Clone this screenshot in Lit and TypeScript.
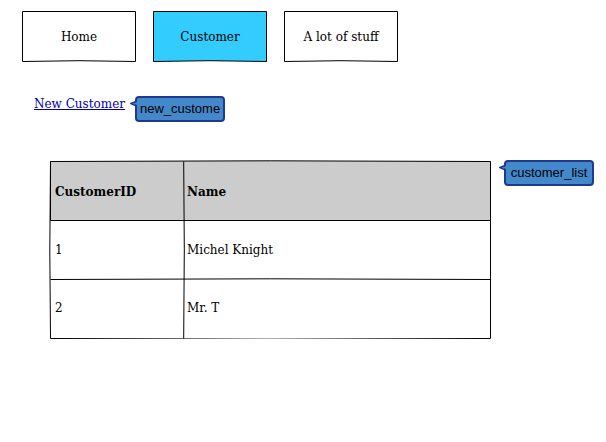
import { LitElement, html, css, svg } from "lit";
import { customElement, property } from "lit/decorators.js";

@customElement("note-callout")
class NoteCallout extends LitElement {
  @property() text = "";

  static styles = css`
    :host {
      display: block;
      position: relative;
      flex: none;
      box-sizing: border-box;
      width: 90px;
      height: 26px;
      border: 2px solid #1e3a8c;
      border-radius: 4px;
      background: #4488cc;
      color: #000;
      font: 13px/22px "Liberation Sans", Arial, sans-serif;
      text-align: center;
      white-space: nowrap;
    }
    .tip {
      position: absolute;
      left: -7px;
      top: 1px;
      width: 9px;
      height: 10px;
    }
  `;

  render() {
    return html`<svg class="tip" viewBox="0 0 9 10" aria-hidden="true">
        <path d="M9 2 H7 L6.5 3 L3 4.6 L7 6 V9 H9 Z" fill="#4488cc" />
        <path d="M6 1 L5.5 2.8 L1 4.5 L6 6.8 V9" fill="none" stroke="#1e3a8c" stroke-width="1.8" /></svg
      >${this.text}`;
  }
}

@customElement("app-root")
class AppRoot extends LitElement {
  static styles = css`
    :host {
      display: block;
      background: #fff;
      color: #000;
      font: 12px/16px "DejaVu Serif", serif;
    }
    .tabs {
      display: flex;
      gap: 17px;
      padding: 11px 22px 0;
    }
    .tab {
      position: relative;
      width: 114px;
      height: 51px;
      padding: 0;
      border: 0;
      background: none;
      color: inherit;
      font: inherit;
    }
    .label {
      position: relative;
    }
    .sketch {
      position: absolute;
      inset: 0;
      width: 100%;
      height: 100%;
      overflow: visible;
      pointer-events: none;
    }
    .sketch path {
      fill: none;
      stroke: #000;
      vector-effect: non-scaling-stroke;
    }
    .sketch .plain {
      fill: #fff;
    }
    .sketch .active {
      fill: #33ccff;
    }
    .actions {
      display: flex;
      gap: 10px;
      padding: 34px 34px 0;
    }
    a {
      color: #0000aa;
    }
    .list {
      display: flex;
      align-items: flex-start;
      gap: 13px;
      padding: 38px 12px 0 50px;
    }
    .grid {
      position: relative;
      flex: 1;
      margin-top: 1px;
      padding-bottom: 2px;
    }
    table {
      width: 100%;
      table-layout: fixed;
      border-collapse: collapse;
    }
    th,
    td {
      height: 58px;
      padding: 0 3px;
      text-align: left;
    }
    th {
      padding-top: 2px;
    }
    .id {
      width: 134px;
      padding-left: 5px;
      box-sizing: border-box;
    }
    th.id {
      height: 60px;
    }
    thead {
      background: #ccc;
    }
  `;

  private tab(label: string, active = false) {
    return html`<button class="tab" aria-current=${active ? "page" : "false"}>
      <svg class="sketch" viewBox="0 0 114 51" preserveAspectRatio="none" aria-hidden="true">
        <path
          class=${active ? "active" : "plain"}
          d="M.5 .5 H113.5 V50.5 Q57 48.9 .5 50.5 Z"
        />
      </svg>
      <span class="label">${label}</span>
    </button>`;
  }

  private rules() {
    const lines = [
      "M.5 .5 Q220 -.9 440.5 .5",
      "M440.5 .5 V177.5",
      "M.5 177.5 Q220 178.9 440.5 177.5",
      "M.5 .5 Q-.9 89 .5 177.5",
      "M.5 .5 V59.5 H440.5",
      "M.5 118.5 Q220 117.1 440.5 118.5",
      "M133.7 .5 Q134.9 89 133.7 177.5",
    ];
    return html`<svg class="sketch" viewBox="0 0 441 178" preserveAspectRatio="none" aria-hidden="true">
      ${lines.map((d) => svg`<path d=${d} />`)}
    </svg>`;
  }

  render() {
    const rows = [
      ["1", "Michel Knight"],
      ["2", "Mr. T"],
    ];
    return html`
      <nav class="tabs">
        ${this.tab("Home")}${this.tab("Customer", true)}${this.tab("A lot of stuff")}
      </nav>
      <div class="actions">
        <a href="#new">New Customer</a>
        <note-callout text="new_custome"></note-callout>
      </div>
      <div class="list">
        <div class="grid">
          <table>
            <thead>
              <tr><th class="id">CustomerID</th><th>Name</th></tr>
            </thead>
            <tbody>
              ${rows.map(([id, name]) => html`<tr><td class="id">${id}</td><td>${name}</td></tr>`)}
            </tbody>
          </table>
          ${this.rules()}
        </div>
        <note-callout text="customer_list"></note-callout>
      </div>
    `;
  }
}
